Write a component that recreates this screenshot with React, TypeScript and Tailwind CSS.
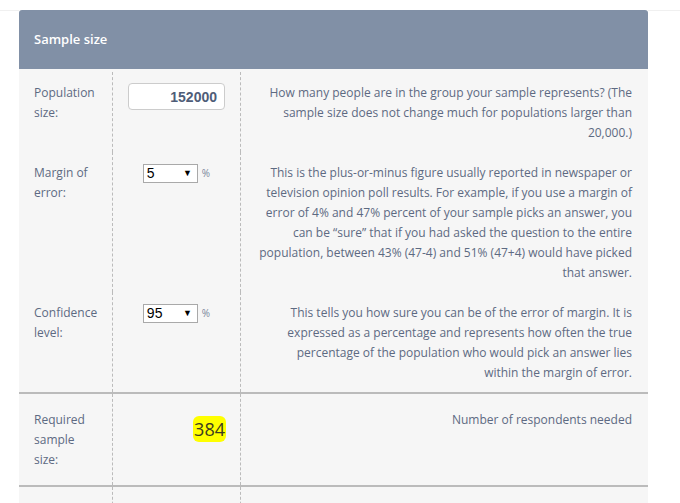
import React from "react";

const FONT = { fontFamily: '"Open Sans", "Noto Sans", sans-serif' };

type Row = {
  label: string;
  control: React.ReactNode;
  text: React.ReactNode;
};

function NumberBox({ value }: { value: string }) {
  return (
    <div
      className="w-[97px] h-[27px] rounded-[4px] border border-[#cccccc] bg-white flex items-center justify-end pr-[7px] text-[14px] font-bold text-[#4f5d78]"
      style={{ fontFamily: '"Liberation Sans", Arial, sans-serif' }}
    >
      {value}
    </div>
  );
}

function SelectBox({ value }: { value: string }) {
  return (
    <div className="flex items-center gap-[4px]">
      <div
        className="w-[55px] h-[19px] border border-[#a9a9a9] bg-white flex items-center justify-between pl-[3px] pr-[5px] text-[14px] text-black"
        style={{ fontFamily: '"Liberation Sans", Arial, sans-serif' }}
      >
        <span>{value}</span>
        <span className="text-[9px] leading-none">▼</span>
      </div>
      <span className="text-[10px] text-[#7a879c]">%</span>
    </div>
  );
}

const inputs: Row[] = [
  {
    label: "Population size:",
    control: <NumberBox value="152000" />,
    text: "How many people are in the group your sample represents? (The sample size does not change much for populations larger than 20,000.)",
  },
  {
    label: "Margin of error:",
    control: <SelectBox value="5" />,
    text: "This is the plus-or-minus figure usually reported in newspaper or television opinion poll results. For example, if you use a margin of error of 4% and 47% percent of your sample picks an answer, you can be \u201csure\u201d that if you had asked the question to the entire population, between 43% (47-4) and 51% (47+4) would have picked that answer.",
  },
  {
    label: "Confidence level:",
    control: <SelectBox value="95" />,
    text: (
      <>
        This tells you how sure you can be of the error of margin. It is expressed as a percentage and
        represents how often the true percentage of the population who would pick an answer lies
        <br />
        within the margin of error.
      </>
    ),
  },
];

function Cells({
  label,
  control,
  text,
  py,
  controlAlign,
}: {
  label: string;
  control: React.ReactNode;
  text: React.ReactNode;
  py: string;
  controlAlign: string;
}) {
  return (
    <div className="grid grid-cols-[94px_128px_1fr]">
      <div className={`pl-[15px] pr-[12px] border-r border-dashed border-[#bbbbbb] ${py}`}>
        {label}
      </div>
      <div className={`border-r border-dashed border-[#bbbbbb] flex ${controlAlign} ${py}`}>
        {control}
      </div>
      <div className={`pl-[18px] pr-[16px] text-right ${py}`}>{text}</div>
    </div>
  );
}

export default function App() {
  return (
    <div className="min-h-screen bg-white pt-[10px] overflow-hidden" style={FONT}>
      <div className="flex">
        <div className="w-[19px] border-t border-[#f0f0f0]" />
        <div className="w-[629px]">
          <div className="h-[59px] bg-[#8190a6] rounded-t-[3px] flex items-center pl-[15px] text-[13px] font-semibold text-white">
            Sample size
          </div>
          <div className="bg-[#f6f6f6] text-[12px] leading-[20px] text-[#5d6a82]">
            <div className="pt-[3px]">
              {inputs.map((r) => (
                <Cells
                  key={r.label}
                  label={r.label}
                  control={r.control}
                  text={r.text}
                  py="pt-[11px] pb-[9px]"
                  controlAlign="justify-center items-start"
                />
              ))}
            </div>
            <div className="border-t-2 border-[#bbbbbb]">
              <Cells
                label="Required sample size:"
                control={
                  <div className="w-full flex justify-end pr-[14px] pt-[6px]">
                    <span className="bg-[#ffff00] rounded-[6px] px-[1px] text-[18px] leading-[26px] text-[#3c3c22]">
                      384
                    </span>
                  </div>
                }
                text="Number of respondents needed"
                py="pt-[16px] pb-[15px]"
                controlAlign="items-start"
              />
            </div>
            <div className="border-t-2 border-[#bbbbbb]">
              <Cells
                label="Response distribution:"
                control={<SelectBox value="50" />}
                text="What do you expect the results will be? If the sample is skewed highly one way or the other, the population probably is, too. If you don't know, use 50%, which gives the largest sample size."
                py="pt-[16px] pb-[15px]"
                controlAlign="justify-center items-start"
              />
            </div>
          </div>
        </div>
        <div className="flex-1 border-t border-[#f0f0f0]" />
      </div>
    </div>
  );
}
